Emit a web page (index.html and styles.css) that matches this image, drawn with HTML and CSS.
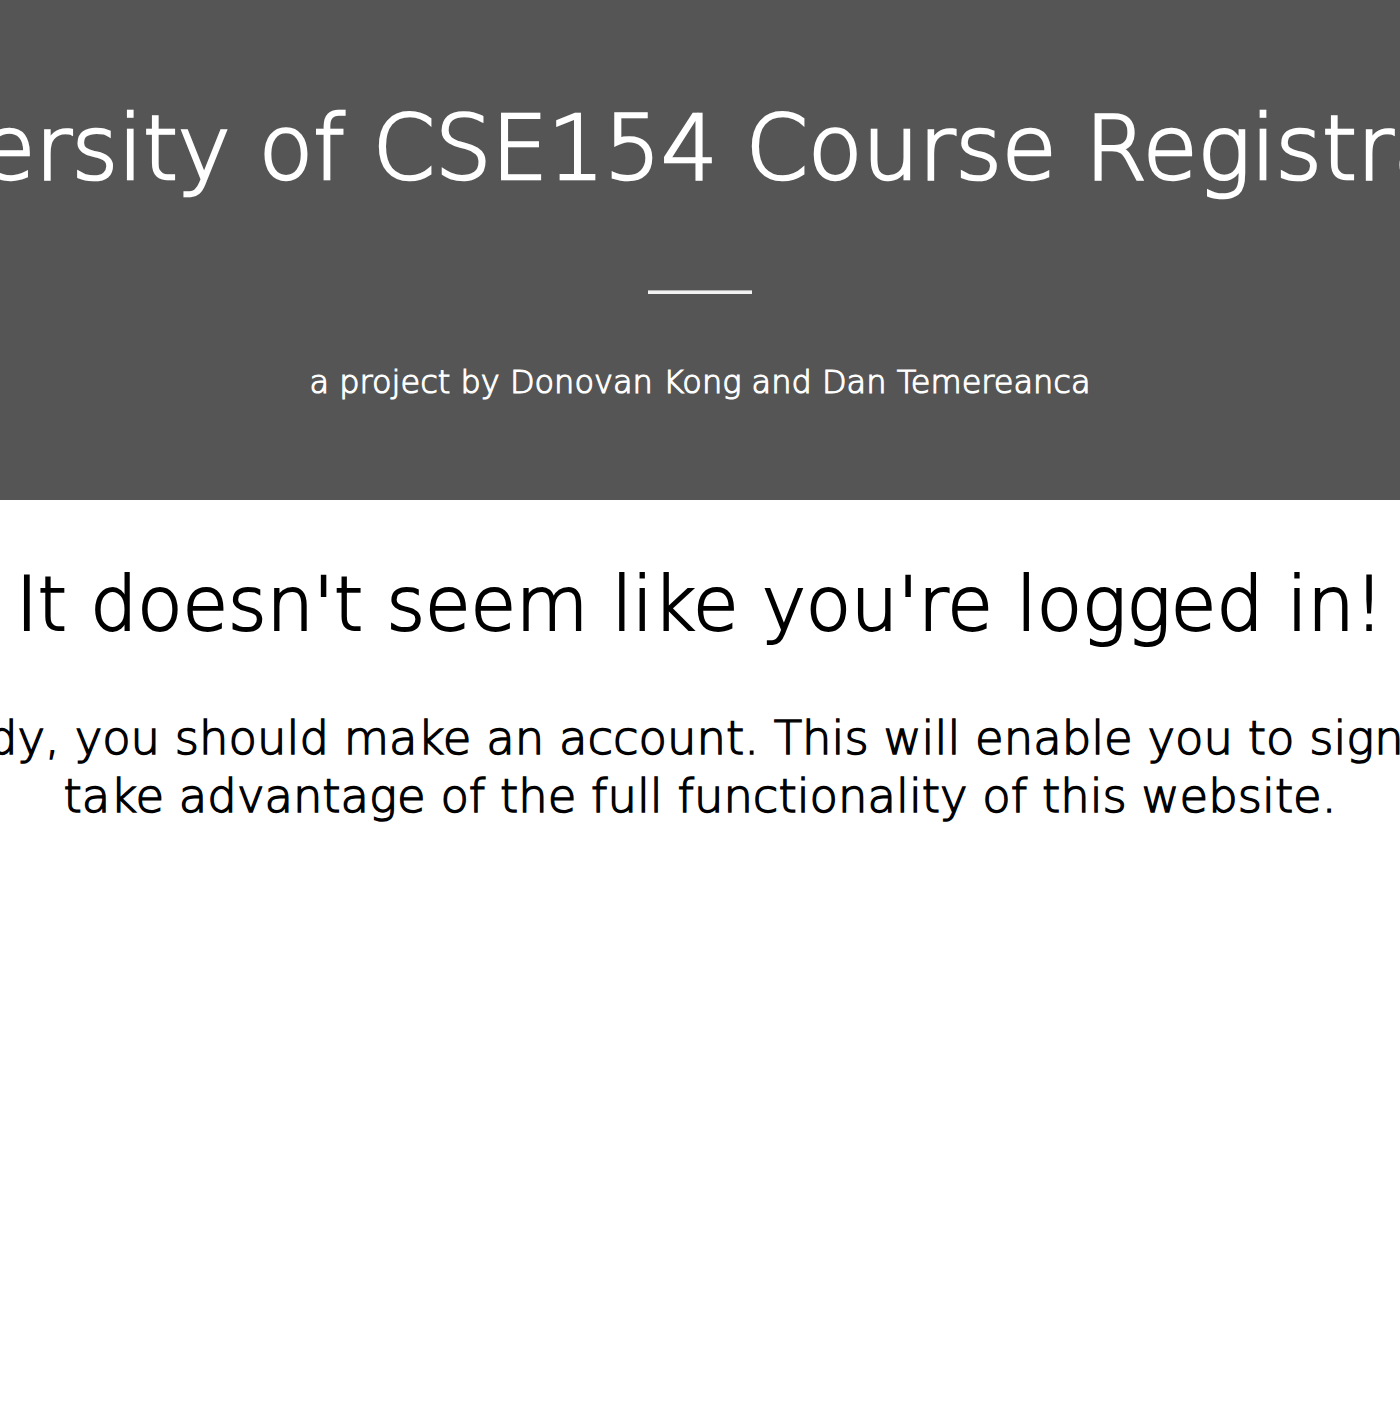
FILE: index.html
```html
<!DOCTYPE html>
<html lang="en">
<head>
<meta charset="utf-8">
<title>CSE154 Course Registration</title>
<link rel="stylesheet" href="styles.css">
</head>
<body>
<header class="hero">
  <h1 class="hero-title">University of CSE154 Course Registration</h1>
  <hr class="hero-rule">
  <p class="hero-sub">a project by Donovan Kong and Dan Temereanca</p>
</header>
<main class="content">
  <h2 class="notice-title">It doesn't seem like you're logged in!</h2>
  <p class="notice-text">Hi buddy, you should make an account. This will enable you to sign in and<br>take advantage of the full functionality of this website.</p>
</main>
</body>
</html>
```
FILE: styles.css
```css
html, body {
  margin: 0;
  padding: 0;
  overflow-x: hidden;
  background: #fff;
}
body {
  font-family: "DejaVu Sans", "Lato", sans-serif;
  font-weight: 200;
}
.hero {
  background: #555555;
  color: #fff;
  height: 500px;
  box-sizing: border-box;
  display: flex;
  flex-direction: column;
  align-items: center;
  padding-top: 104px;
}
.hero-title {
  margin: 0;
  font-size: 89px;
  font-weight: 200;
  line-height: 1;
  white-space: nowrap;
  -webkit-text-stroke: 2.6px #fff;
}
.hero-rule {
  width: 104px;
  height: 3px;
  margin: 97px 0 0;
  border: 0;
  border-top: 1px solid #b4b4b4;
  background: #f2f2f2;
}
.hero-sub {
  margin: 72px 0 0;
  font-size: 32px;
  font-weight: 200;
  line-height: 1;
  white-space: nowrap;
  -webkit-text-stroke: 1.1px #fff;
}
.content {
  display: flex;
  flex-direction: column;
  align-items: center;
  text-align: center;
  color: #000;
}
.notice-title {
  margin: 60px 0 0;
  font-size: 74px;
  font-weight: 200;
  line-height: 1.2;
  white-space: nowrap;
  -webkit-text-stroke: 2px #000;
}
.notice-text {
  margin: 60px 0 0;
  font-size: 46.5px;
  font-weight: 200;
  line-height: 58px;
  white-space: nowrap;
  -webkit-text-stroke: 1.4px #000;
}
```
